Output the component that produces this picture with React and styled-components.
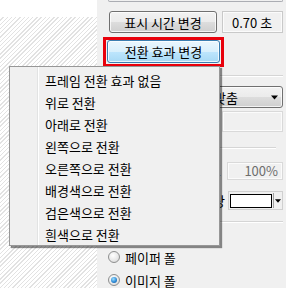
import React from "react";
import styled, { createGlobalStyle } from "styled-components";

const Global = createGlobalStyle`
  html, body { margin: 0; padding: 0; }
  body { font-family: "Noto Sans CJK KR", "Noto Sans", sans-serif; }
`;

const Screen = styled.div`
  position: relative;
  width: 286px;
  height: 288px;
  overflow: hidden;
  display: grid;
  grid-template-columns: 97px 1fr;
  background: #f0f0f0;
  font-family: "Noto Sans CJK KR", "Noto Sans", sans-serif;
  font-size: 13px;
  color: #000;
`;

const Canvas = styled.div`
  display: flex;
  flex-direction: column;
  background: repeating-linear-gradient(135deg, #ffffff 0 2px, #e2e2e2 2px 3px);
`;

const CanvasTop = styled.div`
  height: 17px;
  background: #fff;
`;

const Side = styled.div`
  display: flex;
  flex-direction: column;
  padding: 0 3px 0 0;
`;

const TopStub = styled.div`
  height: 1px;
  margin-left: 11px;
  border: 1px solid #abadb3;
  border-top: none;
  border-radius: 0 0 2px 2px;
`;

const Row = styled.div`
  display: flex;
  align-items: center;
  gap: ${(p) => p.$gap || 5}px;
  margin-top: ${(p) => p.$top || 0}px;
  margin-left: ${(p) => p.$left || 0}px;
  justify-content: ${(p) => (p.$end ? "flex-end" : "flex-start")};
`;

const WinButton = styled.button`
  width: ${(p) => p.$w}px;
  height: ${(p) => p.$h || 22}px;
  padding: 0;
  border: 1px solid ${(p) => (p.$hot ? "#3c7fb1" : "#707070")};
  border-radius: 3px;
  background: ${(p) =>
    p.$hot
      ? "linear-gradient(#eaf6fd 0%, #d9f0fc 50%, #bee6fd 50%, #a7d9f5 100%)"
      : "linear-gradient(#f2f2f2 0%, #ebebeb 50%, #dddddd 50%, #cfcfcf 100%)"};
  box-shadow: inset 0 0 0 1px rgba(255, 255, 255, 0.75);
  font-family: inherit;
  font-size: 13px;
  line-height: 1;
  color: #000;
`;

const ValueBox = styled.div`
  box-sizing: border-box;
  width: ${(p) => p.$w}px;
  height: ${(p) => p.$h}px;
  border: 1px solid ${(p) => (p.$dim ? "#d9d9d9" : "#c9c9c9")};
  background: #f0f0f0;
  box-shadow: inset 0 0 0 1px #fbfbfb;
  display: flex;
  align-items: center;
  justify-content: ${(p) => (p.$right ? "flex-end" : "flex-start")};
  padding: 0 ${(p) => (p.$right ? 4 : 9)}px;
  color: ${(p) => (p.$dim ? "#6d6d6d" : "#000")};
  font-size: 13px;
`;

const Highlight = styled.div`
  box-sizing: border-box;
  width: 121px;
  height: 30px;
  margin: 4px 0 0 6px;
  padding: 0 1px 1px 1px;
  border: 3px solid #e8000b;
  display: flex;
`;

const Rule = styled.div`
  height: 0;
  border-top: 1px solid #d5d5d5;
  border-bottom: 1px solid #fff;
  margin: ${(p) => p.$top}px ${(p) => p.$right || 0}px 0 11px;
`;

const Combo = styled.div`
  box-sizing: border-box;
  height: 22px;
  margin: 9px 0 0 30px;
  border: 1px solid #707070;
  border-radius: 3px;
  background: linear-gradient(#f2f2f2 0%, #ebebeb 50%, #dddddd 50%, #cfcfcf 100%);
  box-shadow: inset 0 0 0 1px rgba(255, 255, 255, 0.75);
  display: flex;
  align-items: center;
  justify-content: flex-end;
`;

const ComboArrow = styled.span`
  width: 44px;
  display: flex;
  justify-content: flex-end;
  padding-right: 4px;
  box-sizing: border-box;
`;

const Label = styled.span`
  color: ${(p) => (p.$dim ? "#8d8d8d" : "#000")};
  font-size: 13px;
  white-space: nowrap;
`;

const ColorPick = styled.div`
  box-sizing: border-box;
  width: 55px;
  height: 19px;
  border: 1px solid #d0d0d0;
  background: #f0f0f0;
  display: flex;
  align-items: center;
  padding-left: 1px;
`;

const Swatch = styled.div`
  box-sizing: border-box;
  width: 42px;
  height: 14px;
  border: 1px solid #000;
  background: #fff;
`;

const PickArrow = styled.div`
  flex: 1;
  height: 15px;
  margin-left: 1px;
  border-left: 1px solid #a0a0a0;
  display: flex;
  align-items: center;
  justify-content: center;
`;

const Radios = styled.div`
  display: flex;
  flex-direction: column;
  gap: 7px;
  margin: 26px 0 0 11px;
`;

const RadioRow = styled.label`
  display: flex;
  align-items: center;
  gap: 5px;
  height: 16px;
  font-size: 13px;
`;

const RadioDot = styled.span`
  box-sizing: border-box;
  width: 12px;
  height: 12px;
  border-radius: 50%;
  border: 1px solid #8e8f8f;
  background: radial-gradient(circle at 40% 35%, #ffffff 0%, #e6e6e6 60%, #cfcfcf 100%);
  display: flex;
  align-items: center;
  justify-content: center;
  &::after {
    content: "";
    width: 6px;
    height: 6px;
    border-radius: 50%;
    display: ${(p) => (p.$on ? "block" : "none")};
    background: radial-gradient(circle at 40% 35%, #9fe0ff 0%, #2f8bd6 55%, #0c4f94 100%);
  }
`;

const Menu = styled.ul`
  position: absolute;
  left: 9px;
  top: 66px;
  z-index: 2;
  box-sizing: border-box;
  width: 211px;
  height: 180px;
  margin: 0;
  padding: 3px 2px 0;
  list-style: none;
  border: 1px solid #979797;
  background: linear-gradient(90deg, #f0f0f0 0 27px, #e2e3e3 27px 28px, #ffffff 28px 29px, #f0f0f0 29px);
  box-shadow: 2px 2px 1px rgba(0, 0, 0, 0.45);
`;

const MenuItem = styled.li`
  height: 22px;
  line-height: 22px;
  padding-left: 33px;
  font-size: 13px;
  white-space: nowrap;
`;

const Tri = ({ size = 7 }) => (
  <svg width={size} height={Math.ceil(size / 2) + 1} viewBox="0 0 7 4">
    <path d="M0 0h7L3.5 4z" fill="#000" />
  </svg>
);

const items = [
  "프레임 전환 효과 없음",
  "위로 전환",
  "아래로 전환",
  "왼쪽으로 전환",
  "오른쪽으로 전환",
  "배경색으로 전환",
  "검은색으로 전환",
  "흰색으로 전환",
];

export default function App() {
  return (
    <Screen>
      <Global />
      <Canvas>
        <CanvasTop />
      </Canvas>
      <Side>
        <TopStub />
        <Row $top={9} $left={12}>
          <WinButton $w={108}>표시 시간 변경</WinButton>
          <ValueBox $w={61} $h={22}>0.70 초</ValueBox>
        </Row>
        <Highlight>
          <WinButton $w={114} $h={23} $hot>전환 효과 변경</WinButton>
        </Highlight>
        <Rule $top={8} />
        <Combo>
          <Label>화면 맞춤</Label>
          <ComboArrow>
            <Tri />
          </ComboArrow>
        </Combo>
        <Row $top={3} $end>
          <ValueBox $w={61} $h={21} $dim />
        </Row>
        <Rule $top={15} $right={7} />
        <Row $top={12} $end $gap={6}>
          <Label $dim>투명도</Label>
          <ValueBox $w={56} $h={18} $dim $right>100%</ValueBox>
        </Row>
        <Row $top={11} $end $gap={3}>
          <Label>배경 색상</Label>
          <ColorPick>
            <Swatch />
            <PickArrow>
              <Tri size={6} />
            </PickArrow>
          </ColorPick>
        </Row>
        <Rule $top={11} />
        <Radios>
          <RadioRow>
            <RadioDot />
            페이퍼 폴
          </RadioRow>
          <RadioRow>
            <RadioDot $on />
            이미지 폴
          </RadioRow>
        </Radios>
      </Side>
      <Menu>
        {items.map((t) => (
          <MenuItem key={t}>{t}</MenuItem>
        ))}
      </Menu>
    </Screen>
  );
}
